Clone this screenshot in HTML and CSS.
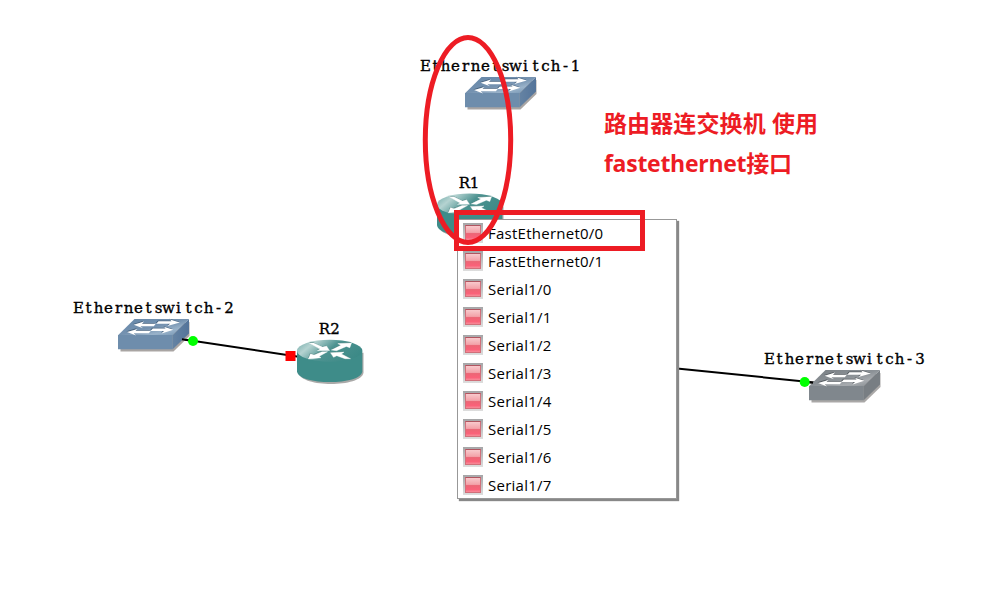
FILE: index.html
```
<!DOCTYPE html>
<html lang="zh-CN">
<head>
<meta charset="utf-8">
<title>Network topology</title>
<link rel="stylesheet" href="styles.css">
</head>
<body>
<main class="canvas">
<svg class="topology" width="988" height="604" viewBox="0 0 988 604">
  <defs>
    <linearGradient id="blueTop" x1="0" y1="0" x2="1" y2="1"><stop offset="0" stop-color="#6386a8"/><stop offset=".5" stop-color="#7592b0"/><stop offset=".72" stop-color="#9ab3ca"/><stop offset="1" stop-color="#6a8cac"/></linearGradient>
    <linearGradient id="blueSide"><stop offset="0" stop-color="#6583a3"/><stop offset="1" stop-color="#54749a"/></linearGradient>
    <linearGradient id="grayTop" x1="0" y1="0" x2="1" y2="1"><stop offset="0" stop-color="#777d82"/><stop offset=".5" stop-color="#8c9297"/><stop offset=".72" stop-color="#a7abaf"/><stop offset="1" stop-color="#80868b"/></linearGradient>
    <linearGradient id="tealTop" x1="0" y1=".25" x2="1" y2=".65"><stop offset="0" stop-color="#83b5b3"/><stop offset=".18" stop-color="#b5d3d1"/><stop offset=".5" stop-color="#4c9290"/><stop offset="1" stop-color="#3b8986"/></linearGradient>
    <path id="switchArrows" d="M15.6 5.8 26 2.6 24 4.7H37.8L35.8 7.2H22.5L25 9.2ZM61.8 3.6 52 .6 53.5 2.3H40.5L38.2 4.8H52L49.5 7ZM9 13.1 19.5 9.9 17.5 11.8H33L30.8 14.3H15.8L18 16.5ZM55.3 10.8 46 7.8 47.5 9.5H34.8L32.5 12H46L43.5 14.5Z"/>
    <path id="routerArrows" d="M12.3 3.2H16.8L25.5 7.4 29.5 6.3 32.5 10.8H20.5L23 9.4ZM34.3 10.3 43.8 5.6 40.8 3.9 54.5 3.2 52.8 8 49.3 6.7 39.5 11ZM25 12H30.5L22.3 16.5 24 18 11.3 19.3 13.5 14 17 15.2ZM33.5 13 47 12.4 44.5 14.2 53.5 19H48L39.8 16 36.5 17.6Z"/>
    <g id="blueSwitch">
      <path d="M2.5 18V32.5H55.5L71.5 17V3Z" fill="#a9a5a3"/>
      <path d="M0 16.3 16.5 0H71L54.7 16.3Z" fill="url(#blueTop)"/>
      <path d="M0 16H54.7V30.3H0Z" fill="#6e8dac"/>
      <path d="M54.7 16.3 71 0V14.5L54.7 30.3Z" fill="url(#blueSide)"/>
      <use href="#switchArrows" x="-.6" y="-.8" fill="#4a6580"/><use href="#switchArrows" fill="#fff"/>
    </g>
    <g id="graySwitch">
      <path d="M2.5 18V32.5H55.5L71.5 17V3Z" fill="#aaa8a7"/>
      <path d="M0 16.3 16.5 0H71L54.7 16.3Z" fill="url(#grayTop)"/>
      <path d="M0 16H54.7V30.3H0Z" fill="#80878d"/>
      <path d="M54.7 16.3 71 0V14.5L54.7 30.3Z" fill="#787e83"/>
      <use href="#switchArrows" x="-.6" y="-.8" fill="#575d62"/><use href="#switchArrows" fill="#fff"/>
    </g>
    <g id="router">
      <path d="M1.5 13V33C4 48 64 48 66.5 33V13Z" fill="#aaa9a8"/>
      <path d="M0 11V31.5C1 46 64.5 46 65.3 31.5V11Z" fill="#3e8c89"/>
      <ellipse cx="32.65" cy="11" rx="32.65" ry="11" fill="url(#tealTop)"/>
      <use href="#routerArrows" x="-.4" y="-.6" fill="#387572"/><use href="#routerArrows" fill="#fff" stroke="#fff" stroke-width=".4"/>
    </g>
  </defs>
  <path class="links" d="M154 335 330 361.5M470 348.5 677 368.5 844 385.5"/>
  <use href="#blueSwitch" x="465" y="77"/>
  <use href="#blueSwitch" x="118" y="319"/>
  <use href="#graySwitch" x="809" y="370"/>
  <use href="#router" x="437" y="193.5"/>
  <use href="#router" x="297" y="339.7"/>
  <path class="links" d="M182 339.3 193 341M805 382 813 382.8"/>
  <circle cx="193" cy="341" r="5" fill="#0f0"/>
  <circle cx="804.7" cy="382" r="5" fill="#0f0"/>
  <path d="M285.5 351H295.5V361H285.5Z" fill="red"/>
  <g class="node-label">
    <text y="70.5" x="425.5 435.5 445.5 455.5 465.5 475.5 485.5 495.5 505.5 515.5 525.5 535.5 545.5 555.5 565.5 575.5">Ethernetswitch-1</text>
    <text y="187.5" x="464.5 474.5">R1</text>
    <text y="312.5" x="78.5 88.5 98.5 108.5 118.5 128.5 138.5 148.5 158.5 168.5 178.5 188.5 198.5 208.5 218.5 229">Ethernetswitch-2</text>
    <text y="333.5" x="324.5 335">R2</text>
    <text y="363.5" x="769.5 779.5 789.5 799.5 809.5 819.5 829.5 839.5 849.5 859.5 869.5 879.5 889.5 899.5 909.5 920">Ethernetswitch-3</text>
  </g>
</svg>
<ul class="port-menu">
  <li><i class="port"></i>FastEthernet0/0</li>
  <li><i class="port"></i>FastEthernet0/1</li>
  <li><i class="port"></i>Serial1/0</li>
  <li><i class="port"></i>Serial1/1</li>
  <li><i class="port"></i>Serial1/2</li>
  <li><i class="port"></i>Serial1/3</li>
  <li><i class="port"></i>Serial1/4</li>
  <li><i class="port"></i>Serial1/5</li>
  <li><i class="port"></i>Serial1/6</li>
  <li><i class="port"></i>Serial1/7</li>
</ul>
<svg class="annotation" width="988" height="604" viewBox="0 0 988 604">
  <g fill="none" stroke="#ed1c24" stroke-width="5">
    <ellipse cx="468" cy="140" rx="42.7" ry="102.5"/>
    <rect x="456.5" y="212.5" width="186" height="36"/>
  </g>
  <g class="note">
    <text x="604" y="131.5" textLength="214">路由器连交换机 使用</text>
    <text x="604" y="172" textLength="188">fastethernet接口</text>
  </g>
</svg>
</main>
</body>
</html>
```
FILE: styles.css
```
body { margin: 0; background: #fff; }
.canvas { position: relative; width: 988px; height: 604px; overflow: hidden; }
.topology, .annotation { position: absolute; left: 0; top: 0; }
.links { stroke: #000; stroke-width: 2; fill: none; }
.node-label {
  font: 15px "DejaVu Serif", serif;
  fill: #000;
  stroke: #000;
  stroke-width: .35;
  text-anchor: middle;
}
.port-menu {
  position: absolute;
  left: 457px;
  top: 219px;
  box-sizing: border-box;
  width: 220px;
  height: 280px;
  margin: 0;
  padding: 0;
  list-style: none;
  background: #fff;
  border: 1px solid #989898;
  box-shadow: 2px 2px 1px #888;
  font: 15px/26px "Open Sans", "Noto Sans", sans-serif;
  letter-spacing: .25px;
  color: #000;
}
.port-menu li {
  display: flex;
  align-items: flex-start;
  gap: 5px;
  height: 28px;
  padding-left: 5px;
  white-space: nowrap;
}
.port-menu li:last-child { height: 26px; }
.port {
  box-sizing: border-box;
  width: 20px;
  height: 20px;
  margin-top: 3px;
  padding: 2px;
  background: linear-gradient(#a5a5a7, #dedede);
}
.port::before {
  content: "";
  display: block;
  box-sizing: border-box;
  height: 16px;
  border: 1px solid #d0707a;
  border-top-color: #b05560;
  background: linear-gradient(#f8c9cc, #f3a2a9 46%, #ec6575 54%, #fa6279 82%, #f78b99);
}
.note {
  font: bold 23px "Open Sans", "Noto Sans CJK SC", sans-serif;
  fill: #ed1c24;
}
```
